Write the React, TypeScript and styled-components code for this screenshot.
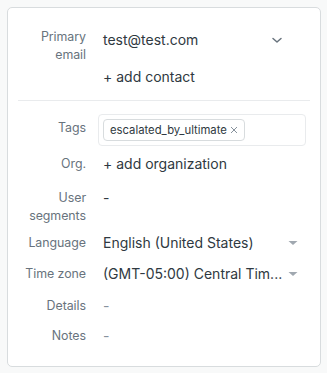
import React from "react";
import styled, { createGlobalStyle } from "styled-components";

const Global = createGlobalStyle`
  html, body { margin: 0; padding: 0; background: #f8f9f9; }
  body { font-family: Inter, "Liberation Sans", Arial, sans-serif; -webkit-font-smoothing: antialiased; }
  * { box-sizing: border-box; }
`;

const Page = styled.div`
  padding: 7px;
  width: 327px;
  height: 373px;
`;

const Card = styled.div`
  width: 314px;
  height: 360px;
  background: #fff;
  border: 1px solid #d8dcde;
  border-radius: 5px;
  padding: 20px 10px 0 10px;
  display: flex;
  flex-direction: column;
`;

const Row = styled.div<{ $mt?: number }>`
  display: flex;
  align-items: flex-start;
  margin-top: ${(p) => p.$mt ?? 0}px;
`;

const Label = styled.div<{ $pt?: number }>`
  width: 68px;
  flex: none;
  text-align: right;
  font-size: 12.4px;
  letter-spacing: -0.05px;
  line-height: 18px;
  color: #68737d;
  padding-top: ${(p) => p.$pt ?? 2}px;
`;

const Value = styled.div`
  flex: 1;
  min-width: 0;
  margin-left: 17px;
  display: flex;
  flex-direction: column;
`;

const Text = styled.div<{ $muted?: boolean }>`
  font-size: 14px;
  line-height: 22px;
  color: ${(p) => (p.$muted ? "#87929d" : "#2f3941")};
  white-space: nowrap;
`;

const Line = styled.div<{ $mt?: number; $pr?: number }>`
  display: flex;
  align-items: center;
  margin-top: ${(p) => p.$mt ?? 0}px;
  padding-right: ${(p) => p.$pr ?? 0}px;
  gap: 6px;
  & > ${Text} { flex: 1; }
`;

const Divider = styled.div`
  height: 1px;
  background: #e9ebed;
  margin-top: 12px;
`;

const TagBox = styled.div`
  margin-left: -5px;
  margin-right: 4px;
  height: 32px;
  border: 1px solid #e9ebed;
  border-radius: 4px;
  display: flex;
  align-items: center;
  padding-left: 4px;
`;

const Tag = styled.div`
  height: 22px;
  display: inline-flex;
  align-items: center;
  gap: 3px;
  padding: 0 6px 0 6px;
  border: 1px solid #d8dcde;
  border-radius: 4px;
  background: #fff;
  font-size: 11.3px;
  color: #2f3941;
`;

const Chevron = () => (
  <svg width="12" height="12" viewBox="0 0 12 12" style={{ flex: "none" }}>
    <path d="M2 4.5l4 3.5 4-3.5" fill="none" stroke="#68737d" strokeWidth="1.5" strokeLinecap="round" strokeLinejoin="round" />
  </svg>
);

const Caret = () => (
  <svg width="10" height="6" viewBox="0 0 10 6" style={{ flex: "none" }}>
    <path d="M0.5 1h9L5 5z" fill="#a0a8b0" />
  </svg>
);

const Close = () => (
  <svg width="8" height="8" viewBox="0 0 8 8" style={{ flex: "none" }}>
    <path d="M1 1l6 6M7 1l-6 6" stroke="#87929d" strokeWidth="1" />
  </svg>
);

export default function App() {
  return (
    <Page>
      <Global />
      <Card>
        <Row>
          <Label $pt={0}>Primary email</Label>
          <Value>
            <Line $mt={1} $pr={27}>
              <Text>test@test.com</Text>
              <Chevron />
            </Line>
            <Line $mt={15}>
              <Text>+ add contact</Text>
            </Line>
          </Value>
        </Row>
        <Divider />
        <Row $mt={13}>
          <Label $pt={5}>Tags</Label>
          <Value>
            <TagBox>
              <Tag>
                escalated_by_ultimate
                <Close />
              </Tag>
            </TagBox>
          </Value>
        </Row>
        <Row $mt={7}>
          <Label>Org.</Label>
          <Value>
            <Text>+ add organization</Text>
          </Value>
        </Row>
        <Row $mt={12}>
          <Label>User segments</Label>
          <Value>
            <Text>-</Text>
          </Value>
        </Row>
        <Row $mt={7}>
          <Label>Language</Label>
          <Value>
            <Line $pr={12}>
              <Text>English (United States)</Text>
              <Caret />
            </Line>
          </Value>
        </Row>
        <Row $mt={9}>
          <Label>Time zone</Label>
          <Value>
            <Line $pr={12}>
              <Text>(GMT-05:00) Central Tim...</Text>
              <Caret />
            </Line>
          </Value>
        </Row>
        <Row $mt={10}>
          <Label>Details</Label>
          <Value>
            <Text $muted>-</Text>
          </Value>
        </Row>
        <Row $mt={8}>
          <Label>Notes</Label>
          <Value>
            <Text $muted>-</Text>
          </Value>
        </Row>
      </Card>
    </Page>
  );
}
